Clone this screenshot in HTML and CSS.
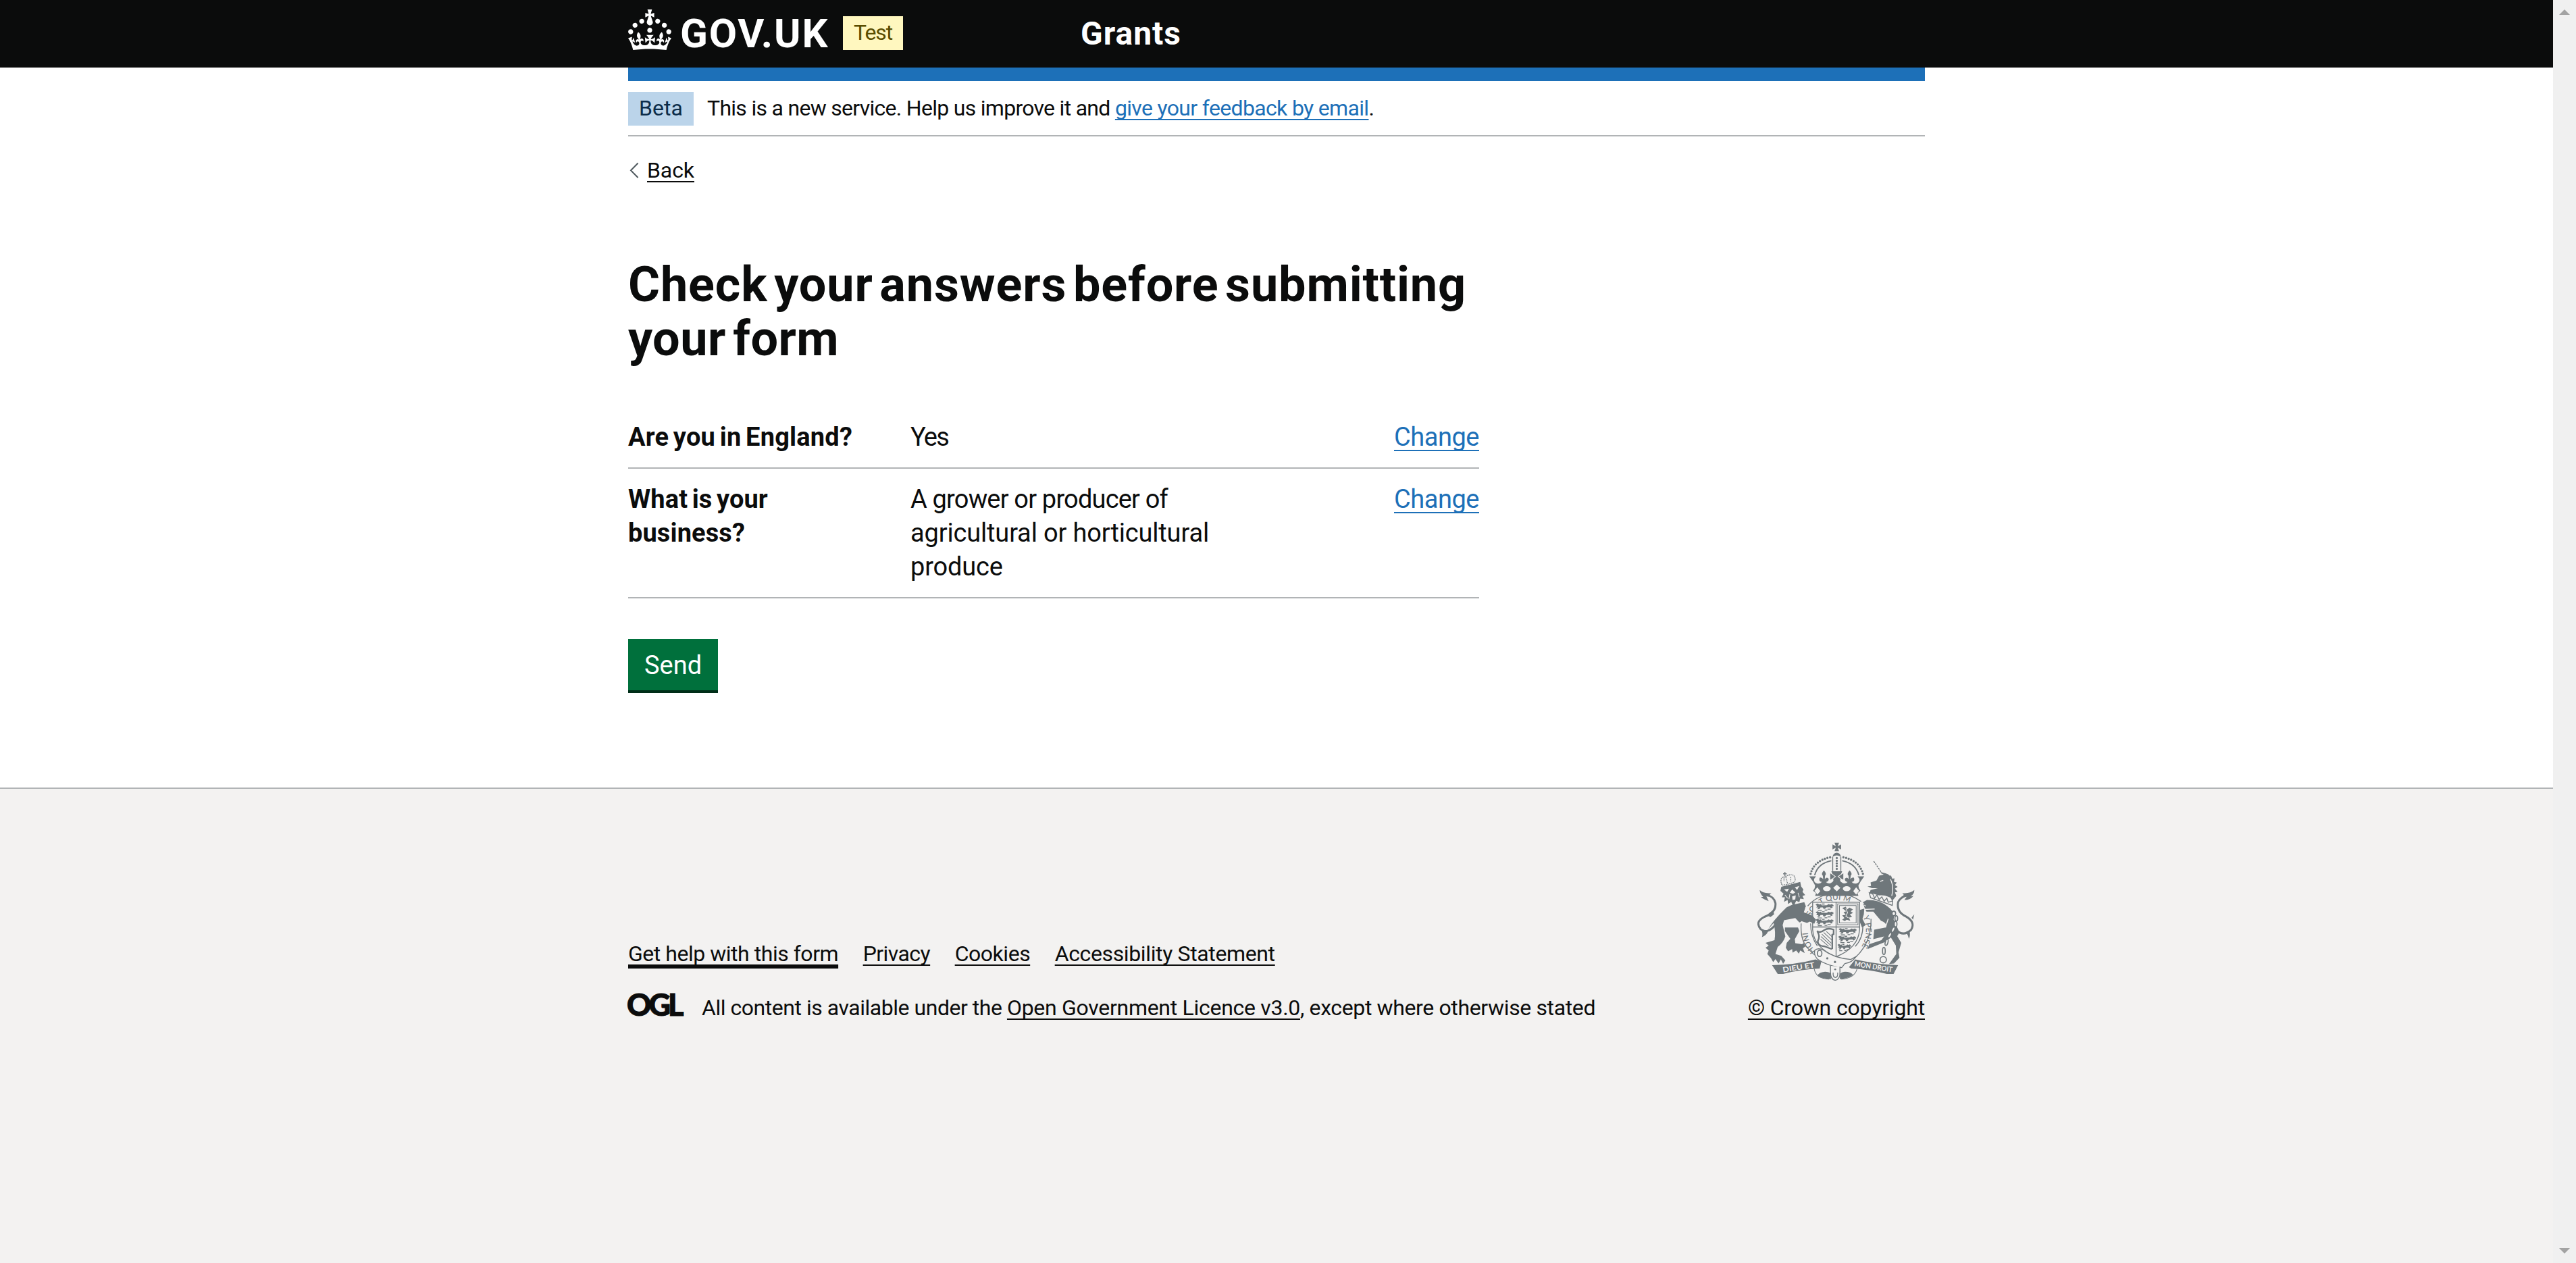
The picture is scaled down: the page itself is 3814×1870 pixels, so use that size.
FILE: index.html
```html
<!DOCTYPE html>
<html lang="en">
<head>
<meta charset="utf-8">
<title>Check your answers before submitting your form - Grants - GOV.UK</title>
<link rel="stylesheet" href="styles.css">
</head>
<body>
<div class="page">
  <header class="header">
    <div class="container header-row">
      <a class="logo" href="#">
        <svg class="crown" viewBox="0 0 32 30" width="64" height="60" aria-hidden="true"><path fill="currentColor" fill-rule="evenodd" d="M22.6 10.4c-1 .4-2-.1-2.4-1-.4-.9.1-2 1-2.4.9-.4 2 .1 2.4 1s-.1 2-1 2.4m-5.9 6.7c-.9.4-2-.1-2.4-1-.4-.9.1-2 1-2.4.9-.4 2 .1 2.4 1s-.1 2-1 2.4m10.8-3.7c-1 .4-2-.1-2.4-1-.4-.9.1-2 1-2.4.9-.4 2 .1 2.4 1s0 2-1 2.4m3.3 4.8c-1 .4-2-.1-2.4-1-.4-.9.1-2 1-2.4.9-.4 2 .1 2.4 1s-.1 2-1 2.4M17 4.7l2.3 1.2V2.5l-2.3.7-.2-.2.9-3h-3.4l.9 3-.2.2c-.1.1-2.3-.7-2.3-.7v3.4L15 4.7c.1.1.1.2.2.2l-1.3 4c-.1.2-.1.4-.1.6 0 1.1.8 2 1.9 2.2h.7c1-.2 1.9-1.1 1.9-2.1 0-.2 0-.4-.1-.6l-1.3-4c-.1-.2 0-.2.1-.3m-7.6 5.7c.9.4 2-.1 2.4-1 .4-.9-.1-2-1-2.4-.9-.4-2 .1-2.4 1s0 2 1 2.4m-5 3c.9.4 2-.1 2.4-1 .4-.9-.1-2-1-2.4-.9-.4-2 .1-2.4 1s.1 2 1 2.4m-3.2 4.8c.9.4 2-.1 2.4-1 .4-.9-.1-2-1-2.4-.9-.4-2 .1-2.4 1s0 2 1 2.4m14.8 11c4.4 0 8.6.3 12.3.8 1.1-4.5 2.4-7 3.7-8.8l-2.5-.9c.2 1.3.3 1.9 0 2.7-.4-.4-.8-1.1-1.1-2.3l-1.2 4c.7-.5 1.3-.8 2-.9-1.1 2.5-2.6 3.1-3.5 3-1.1-.2-1.7-1.2-1.5-2.1.3-1.2 1.5-1.5 2.1-.1 1.1-2.3-.8-3-2-2.3 1.9-1.9 2.1-3.5.6-5.6-2.1 1.6-2.1 3.2-1.2 5.5-1.2-1.4-3.2-.6-2.5 1.6.9-1.4 2.1-.5 1.9.8-.2 1.1-1.7 2.1-3.5 1.9-2.7-.2-2.9-2.1-2.9-3.6.7-.1 1.9.5 2.9 1.9l.4-4.3c-1.1 1.1-2.1 1.4-3.2 1.4.4-1.2 2.1-3 2.1-3h-5.4s1.7 1.9 2.1 3c-1.1 0-2.1-.2-3.2-1.4l.4 4.3c1-1.4 2.2-2 2.9-1.9-.1 1.5-.2 3.4-2.9 3.6-1.9.2-3.4-.8-3.5-1.9-.2-1.3 1-2.2 1.9-.8.7-2.3-1.2-3-2.5-1.6.9-2.2.9-3.9-1.2-5.5-1.5 2-1.3 3.7.6 5.6-1.2-.7-3.1 0-2 2.3.6-1.4 1.8-1.1 2.1.1.2.9-.3 1.9-1.5 2.1-.9.2-2.4-.5-3.5-3 .6 0 1.2.3 2 .9l-1.2-4c-.3 1.1-.7 1.9-1.1 2.3-.3-.8-.2-1.4 0-2.7l-2.9.9C1.3 23 2.6 25.5 3.7 30c3.7-.5 7.9-.8 12.3-.8"/></svg>
        <span class="wordmark">GOV.UK</span>
      </a>
      <strong class="tag tag-test">Test</strong>
      <a class="service" href="#">Grants</a>
    </div>
  </header>
  <div class="container">
    <div class="bar"></div>
    <div class="phase">
      <strong class="tag tag-beta">Beta</strong>
      <span class="phase-text"><span class="t-intro">This is a new service. Help us improve it and </span><a class="link t-email" href="#">give your feedback by email</a>.</span>
    </div>
    <a class="back" href="#">
      <svg width="28" height="40" viewBox="0 0 28 40" aria-hidden="true"><path d="M14.6 9.5 4 20.3 14.6 31" fill="none" stroke="#505a5f" stroke-width="2"/></svg>
      <span class="back-text">Back</span>
    </a>
    <main class="main">
      <h1 class="title"><span class="t-title1">Check your answers before submitting</span> <span class="t-title2">your form</span></h1>
      <dl class="summary">
        <div class="row">
          <dt class="key">Are you in England?</dt>
          <dd class="value"><span class="t-yes">Yes</span></dd>
          <dd class="action"><a class="link" href="#">Change</a></dd>
        </div>
        <div class="row">
          <dt class="key key-narrow">What is your business?</dt>
          <dd class="value"><span class="t-grower">A grower or producer of</span> <span>agricultural or horticultural produce</span></dd>
          <dd class="action"><a class="link" href="#">Change</a></dd>
        </div>
      </dl>
      <button class="button" type="button">Send</button>
    </main>
  </div>
  <footer class="footer">
    <div class="container footer-row">
      <div class="footer-main">
        <nav class="footer-links">
          <a class="f-link f-active" href="#">Get help with this form</a>
          <a class="f-link t-privacy" href="#">Privacy</a>
          <a class="f-link" href="#">Cookies</a>
          <a class="f-link t-access" href="#">Accessibility Statement</a>
        </nav>
        <div class="licence">
          <span class="ogl">OGL</span>
          <span class="licence-text"><span class="t-all">All content is available under the </span><a class="f-link t-ogl" href="#">Open Government Licence v3.0</a><span class="t-except">, except where otherwise stated</span></span>
        </div>
      </div>
      <a class="copyright" href="#">
        <svg class="arms" viewBox="132 52 698 614" width="233" height="205" aria-hidden="true">
          <defs>
            <path id="garter" d="M392 538A129 136 0 1 1 577 538"/>
            <g id="lion-passant">
              <path d="M2 5 10 1 20 5 25 3 30 9 52 8 60 3 66 6 74 3 82 8 80 14 74 12 78 19 70 22 66 17 50 18 44 24 38 25 34 18 24 18 20 25 9 26 15 19 5 18 9 12Z"/>
              <path d="M30 3h12M55 26h14M12 31h18M42 30h12" class="ln"/>
            </g>
            <g id="half-crown">
              <path d="M368 192Q384 132 458 118" class="beads"/>
              <path d="M386 198Q400 146 460 134" class="ln" stroke-width="6"/>
              <path d="M466 116V180" class="ln" stroke-width="4"/>
              <path d="M362 203 392 203Q374 222 392 233 408 240 418 228 402 226 408 209 418 206 424 216L422 200Q412 193 427 177 442 193 432 200L431 216Q440 203 448 214 450 226 436 229 450 240 462 230 474 222 466 212L455 218V190L466 196 460 181H485V290H388L392 278 379 267 386 256 388 244 378 226Z"/>
              <path d="M398 252 411 269 398 284 385 268Z" class="bg"/>
              <ellipse cx="440" cy="258" rx="17" ry="11" class="bg"/>
            </g>
          </defs>
          <g fill="#6f777b" stroke="none">
            <!-- lion supporter -->
            <path d="M212 418Q176 462 146 437 120 404 163 383 216 364 212 322 206 292 172 286" class="ln" stroke-width="9"/>
            <path d="M142 264Q160 281 194 277 178 286 198 294L172 292 182 313Q162 306 147 296L158 294Q144 282 142 264ZM148 436Q158 456 152 473 172 466 180 446ZM172 376 190 384 206 372 202 352Z"/>
            <path d="M285 330 340 318 352 350 376 378 390 396 384 412 362 404 356 412 338 402 318 408 300 388 250 398 244 420 256 470Q246 500 222 516L212 548 238 556 256 576 246 591 236 572 226 590 212 570 202 584 192 566 176 548 182 532 168 520 182 510 168 498 208 486Q214 450 204 410L180 438Q200 400 262 340Z"/>
            <path d="M254 430H312L318 446 298 482 300 500 330 504 344 494 350 510 334 522 342 544 322 532 316 546 304 532 288 542 286 526 268 536 258 520 262 498 278 480 254 446Z"/>
            <path d="M238 250 322 228 326 248 336 262 332 272 344 286 332 290 338 304 322 302 318 318 304 312 292 338 282 316 268 326 266 308 250 316 254 296 240 296 248 280 234 268Z"/>
            <path d="M250 262 272 258 264 272ZM298 252 318 246 308 264ZM276 276 286 262 300 274 290 281ZM286 292 302 288 300 306 288 308Z" class="bg"/>
            <path d="M254 286 266 300M312 276 318 296M276 282 272 304M238 244Q278 240 320 224" class="ln bgs" stroke-width="3"/>
            <path d="M240 240Q228 206 256 204 290 186 298 208 302 222 296 226M242 242Q270 240 298 228M258 206 266 236M250 208 250 226M280 206 280 226" class="ln" stroke-width="4" stroke-dasharray="5 3"/>
            <path d="M254 184V202M246 192H262" class="ln" stroke-width="4"/>
            <!-- unicorn supporter -->
            <path d="M752 446Q782 470 814 440 834 406 792 382 748 362 756 318 764 298 792 288" class="ln" stroke-width="9"/>
            <path d="M828 264Q808 281 774 277 790 286 768 296L794 294 784 308Q812 308 824 290L812 292Q828 282 828 264ZM822 396 828 372 816 386ZM790 450Q800 462 804 480 812 466 806 442Z"/>
            <path d="M648 136 686 192" class="ln" stroke-width="5" stroke-dasharray="9 3"/>
            <path d="M634 230 660 222 672 200 692 196 676 184 700 190 712 194Q734 210 736 240L732 304Q700 284 672 288L630 276 634 264 666 256 640 256 620 248 636 246Z"/>
            <path d="M716 206 724 198 730 214 740 212 738 228 750 230 742 242 754 250 742 258 754 272 742 274 748 290 730 312 722 298Z"/>
            <path d="M722 216Q738 248 728 290M676 226 690 221" class="ln bgs" stroke-width="4"/>
            <path d="M628 276 634 298 730 332 732 312 712 318 706 300 694 314 684 294 672 306 662 286 652 300 644 282Z" fill="#f3f2f1" stroke="#6f777b" stroke-width="4"/>
            <path d="M618 308Q676 308 708 336 744 360 736 394L762 452 752 468 770 498 758 540 762 564 738 590 716 592 748 548 746 510 724 474 700 494 620 526 628 504 682 486 694 470 646 482 650 440 700 430Q712 412 680 400L646 360 606 360 598 396 614 424 596 428 582 398 588 348 606 336 600 318Z"/>
            <path d="M604 350 652 348M612 336 600 322M700 430 712 392" class="ln bgs" stroke-width="4"/>
            <path d="M602 330 630 316" class="ln" stroke-width="4"/>
            <g fill="#f3f2f1" stroke="#6f777b" stroke-width="5">
              <ellipse cx="737" cy="368" rx="8" ry="10"/><ellipse cx="748" cy="390" rx="6" ry="12"/><ellipse cx="745" cy="415" rx="6" ry="12"/><ellipse cx="734" cy="440" rx="6" ry="13" transform="rotate(25 734 440)"/><ellipse cx="719" cy="464" rx="6" ry="13" transform="rotate(30 719 464)"/><ellipse cx="705" cy="496" rx="6" ry="14" transform="rotate(15 705 496)"/><ellipse cx="693" cy="534" rx="6" ry="16"/><circle cx="690" cy="573" r="14"/>
            </g>
            <!-- garter and shield -->
            <path d="M345 340Q380 282 484 280 560 282 600 326L634 400Q640 480 604 540 560 592 484 600 400 590 356 535 316 470 326 400Z" class="bg"/>
            <path d="M355 335Q400 282 482 280 550 282 592 315M326 412Q322 480 350 516 385 556 396 556M636 392Q640 510 544 582M368 412Q368 470 398 512M600 420Q600 480 566 514" class="ln" stroke-width="4"/>
            <text class="motto"><textPath href="#garter" startOffset="3">HONI</textPath></text>
            <text class="motto"><textPath href="#garter" startOffset="165">SO</textPath></text>
            <text class="motto"><textPath href="#garter" startOffset="236">T QUI M</textPath></text>
            <text class="motto"><textPath href="#garter" startOffset="458">Y PENSE</textPath></text>
            <path d="M377 318H585V440Q580 520 481 560 382 520 377 440Z" fill="#f3f2f1" stroke="#6f777b" stroke-width="4"/>
            <path d="M481 318V558M377 428H585" class="ln" stroke-width="4"/>
            <use href="#lion-passant" x="388" y="323"/><use href="#lion-passant" x="388" y="357"/><use href="#lion-passant" x="388" y="391"/>
            <use href="#lion-passant" x="490" y="432"/><use href="#lion-passant" x="488" y="466"/><use href="#lion-passant" transform="translate(486 502) scale(.75 1)"/>
            <path d="M488 325H578V418H488ZM496 333H570V410H496Z" class="ln" stroke-width="3"/>
            <path d="M508 344 524 338 530 350 540 342 556 350 546 358 556 366 542 372 552 384 538 386 544 400 528 396 520 402 508 396 518 388 508 376 524 374 514 362 526 358Z"/>
            <path d="M524 346 532 364 524 380 536 388" class="ln bgs" stroke-width="3"/>
            <path d="M396 446Q412 456 428 442 446 430 470 440V460L464 462V526M398 448Q412 470 400 490 398 512 430 514L462 526" class="ln" stroke-width="7"/>
            <path d="M418 460 460 500M414 470 458 510M412 482 448 514M426 452 462 486M438 448 462 470" class="ln" stroke-width="3"/>
            <!-- lion's paw and unicorn's hoof over the shield -->
            <path d="M330 360 376 378 392 396 384 414 364 404 352 410 322 400ZM586 352 606 346 604 372 598 392 612 420 596 430 584 400Z"/>
            <!-- buckle -->
            <path d="M386 532Q400 518 424 530 470 566 546 572L568 560Q552 586 520 590L506 608Q440 600 398 570 382 552 386 532Z" fill="#f3f2f1" stroke="#6f777b" stroke-width="4"/>
            <ellipse cx="408" cy="545" rx="10" ry="14" fill="none" stroke="#6f777b" stroke-width="5"/>
            <circle cx="442" cy="567" r="5"/><circle cx="476" cy="583" r="5"/>
            <!-- motto scroll -->
            <path d="M197 597Q300 596 390 572L416 580 408 612Q320 616 246 636H222ZM756 597Q660 594 566 572L538 606 548 612Q630 616 706 636H736Z"/>
            <path d="M384 614Q392 658 450 659M574 614Q562 656 504 659" class="ln" stroke-width="3"/>
            <path d="M398 644Q404 628 432 626 450 626 458 634V659Q420 658 398 644ZM556 640Q548 626 520 626 502 628 498 636V659Q540 656 556 640Z"/>
            <path d="M456 600V626Q456 662 478 664 500 660 498 626V604" fill="#f3f2f1" stroke="#6f777b" stroke-width="4"/>
            <path d="M468 630Q466 650 478 652 490 650 488 630" class="ln" stroke-width="4"/>
            <circle cx="477" cy="616" r="4"/>
            <text class="scroll" transform="translate(246 629) rotate(-9)" textLength="142" lengthAdjust="spacingAndGlyphs">DIEU ET</text>
            <text class="scroll" transform="translate(561 602) rotate(9)" textLength="170" lengthAdjust="spacingAndGlyphs">MON DROIT</text>
            <!-- imperial crown -->
            <use href="#half-crown"/>
            <use href="#half-crown" transform="translate(968 0) scale(-1 1)"/>
            <path d="M474 54H494L488 70 503 62V84L488 76 494 92H474L480 76 465 84V62L480 70ZM466 116A18 18 0 1 1 502 116Q484 104 466 116Z"/>
            <path d="M484 122V178" class="beads"/>
            <path d="M484 240 500 254 484 270 468 254Z" class="bg"/>
            <path d="M456 188 478 204 456 222M512 188 490 204 512 222" fill="none" stroke="#f3f2f1" stroke-width="3"/>
          </g>
        </svg>
        <span class="copyright-text">© Crown copyright</span>
      </a>
    </div>
  </footer>
</div>
<div class="scrollbar" aria-hidden="true">
  <span class="arrow arrow-up"></span>
  <span class="arrow arrow-down"></span>
</div>
</body>
</html>
```
FILE: styles.css
```css
* { box-sizing: border-box; }

body {
  margin: 0;
  display: flex;
  height: 1870px;
  overflow: hidden;
  background: #fff;
  color: #0b0c0c;
  font: 32px/40px Roboto, Arial, sans-serif;
}

a { color: inherit; text-decoration: none; }

.page { flex: 1; display: flex; flex-direction: column; }
.container { width: 1920px; margin: 0 auto; }

/* Header */
.header { height: 100px; background: #0b0c0c; color: #fff; }
.header-row { display: flex; align-items: flex-start; }
.logo { display: flex; width: 318px; }
.crown { margin-top: 14px; display: block; }
.wordmark {
  margin: 20px 0 0 13px;
  font-size: 60px;
  font-weight: 700;
  line-height: 60px;
  letter-spacing: 1.8px;
}
.tag {
  display: block;
  height: 50px;
  line-height: 48px;
  padding: 0 0 0 16px;
  font-weight: 400;
}
.tag-test {
  width: 89px;
  margin-top: 24px;
  background: #fff7bf;
  color: #594d00;
  letter-spacing: -1.1px;
}
.service {
  margin: 20px 0 0 263px;
  font-size: 48px;
  font-weight: 700;
  line-height: 60px;
  letter-spacing: 1px;
}

.bar { height: 20px; background: #1d70b8; }

/* Phase banner */
.phase {
  display: flex;
  height: 82px;
  padding-top: 16px;
  border-bottom: 2px solid #b1b4b6;
}
.tag-beta { width: 97px; background: #bbd4ea; color: #0c2d4a; }
.phase-text { margin-left: 20px; line-height: 48px; }
.t-intro { letter-spacing: -0.71px; white-space: pre; }
.t-email { letter-spacing: -0.66px; }

.link, .f-link, .back-text, .copyright-text {
  text-decoration: underline 2px;
  text-underline-offset: 5px;
  text-decoration-skip-ink: none;
}
.link { color: #1d70b8; }

.back { display: flex; width: 100px; margin-top: 30px; }
.back-text { letter-spacing: -0.08px; }

/* Summary */
.main { width: 1260px; margin-top: 110px; }
.title { margin: 0; font-size: 72px; line-height: 80px; font-weight: 700; }
.t-title1 { letter-spacing: 0.84px; word-spacing: -9px; }
.t-title2 { letter-spacing: 0.4px; word-spacing: -7.6px; }
.summary { margin: 80px 0 60px; font-size: 38px; line-height: 50px; }
.row {
  display: grid;
  grid-template-columns: 418px 480px 1fr;
  padding-bottom: 20px;
  border-bottom: 2px solid #b1b4b6;
}
.row + .row { padding-top: 20px; }
.key { font-weight: 700; letter-spacing: 0.2px; word-spacing: -3px; }
.key-narrow { width: 300px; letter-spacing: 0.1px; }
.value { margin: 0; letter-spacing: -0.16px; }
.value span { display: block; }
.t-yes { letter-spacing: -1.79px; }
.value .t-grower { letter-spacing: -0.82px; }
.value .t-yes { letter-spacing: -1.79px; }
.action { margin: 0; text-align: right; letter-spacing: -0.47px; }
.action .link { text-underline-offset: 6px; }

.button {
  display: block;
  width: 133px;
  height: 76px;
  margin: 0 0 144px;
  padding: 20px 0 18px 24px;
  border: 0;
  background: #00703c;
  box-shadow: 0 4px 0 #002d18;
  color: #fff;
  font: 38px/38px Roboto, Arial, sans-serif;
  text-align: left;
}

/* Footer */
.footer {
  flex: 1;
  padding-top: 79px;
  background: #f3f2f1;
  border-top: 2px solid #b1b4b6;
}
.footer-row { display: flex; justify-content: space-between; align-items: flex-end; }
.footer-links { display: flex; gap: 36.5px; margin-bottom: 40px; }
.f-link { letter-spacing: -0.47px; }
.f-active { text-decoration-thickness: 6px; }
.t-privacy { letter-spacing: -0.55px; }
.t-access { letter-spacing: -0.37px; }
.licence { display: flex; }
.ogl {
  width: 111px;
  margin-left: -2px;
  font: 900 45px/30px Lato, Arial, sans-serif;
  letter-spacing: -4px;
  -webkit-text-stroke: 1px #0b0c0c;
}
.licence-text { white-space: pre; }
.t-all { letter-spacing: -0.47px; }
.t-ogl { letter-spacing: -0.29px; }
.t-except { letter-spacing: -0.37px; }

.copyright { display: flex; flex-direction: column; align-items: center; gap: 20px; }
.copyright-text { letter-spacing: -0.17px; }
.arms { display: block; }
.arms .ln { fill: none; stroke: #6f777b; stroke-width: 4; }
.arms .beads { fill: none; stroke: #6f777b; stroke-width: 10; stroke-linecap: round; stroke-dasharray: 0 12; }
.arms .bg { fill: #f3f2f1; }
.arms .ln.bgs { stroke: #f3f2f1; }
.arms .ln[stroke-width="3"] { stroke-width: 3; }
.arms .ln[stroke-width="6"] { stroke-width: 6; }
.arms .ln[stroke-width="7"] { stroke-width: 7; }
.arms .ln[stroke-width="9"] { stroke-width: 9; }
.arms .motto { font: 500 35px Lato, sans-serif; }
.arms .scroll { font: 700 32px Lato, sans-serif; fill: #f3f2f1; }

/* Scrollbar gutter */
.scrollbar {
  width: 34px;
  display: flex;
  flex-direction: column;
  justify-content: space-between;
  padding: 14px 0 14px 9px;
  background: #f0f0f0;
}
.arrow { border: 8px solid transparent; width: 0; height: 0; }
.arrow-up { border-top: 0; border-bottom-color: #a3a3a3; }
.arrow-down { border-bottom: 0; border-top-color: #a3a3a3; }
```
